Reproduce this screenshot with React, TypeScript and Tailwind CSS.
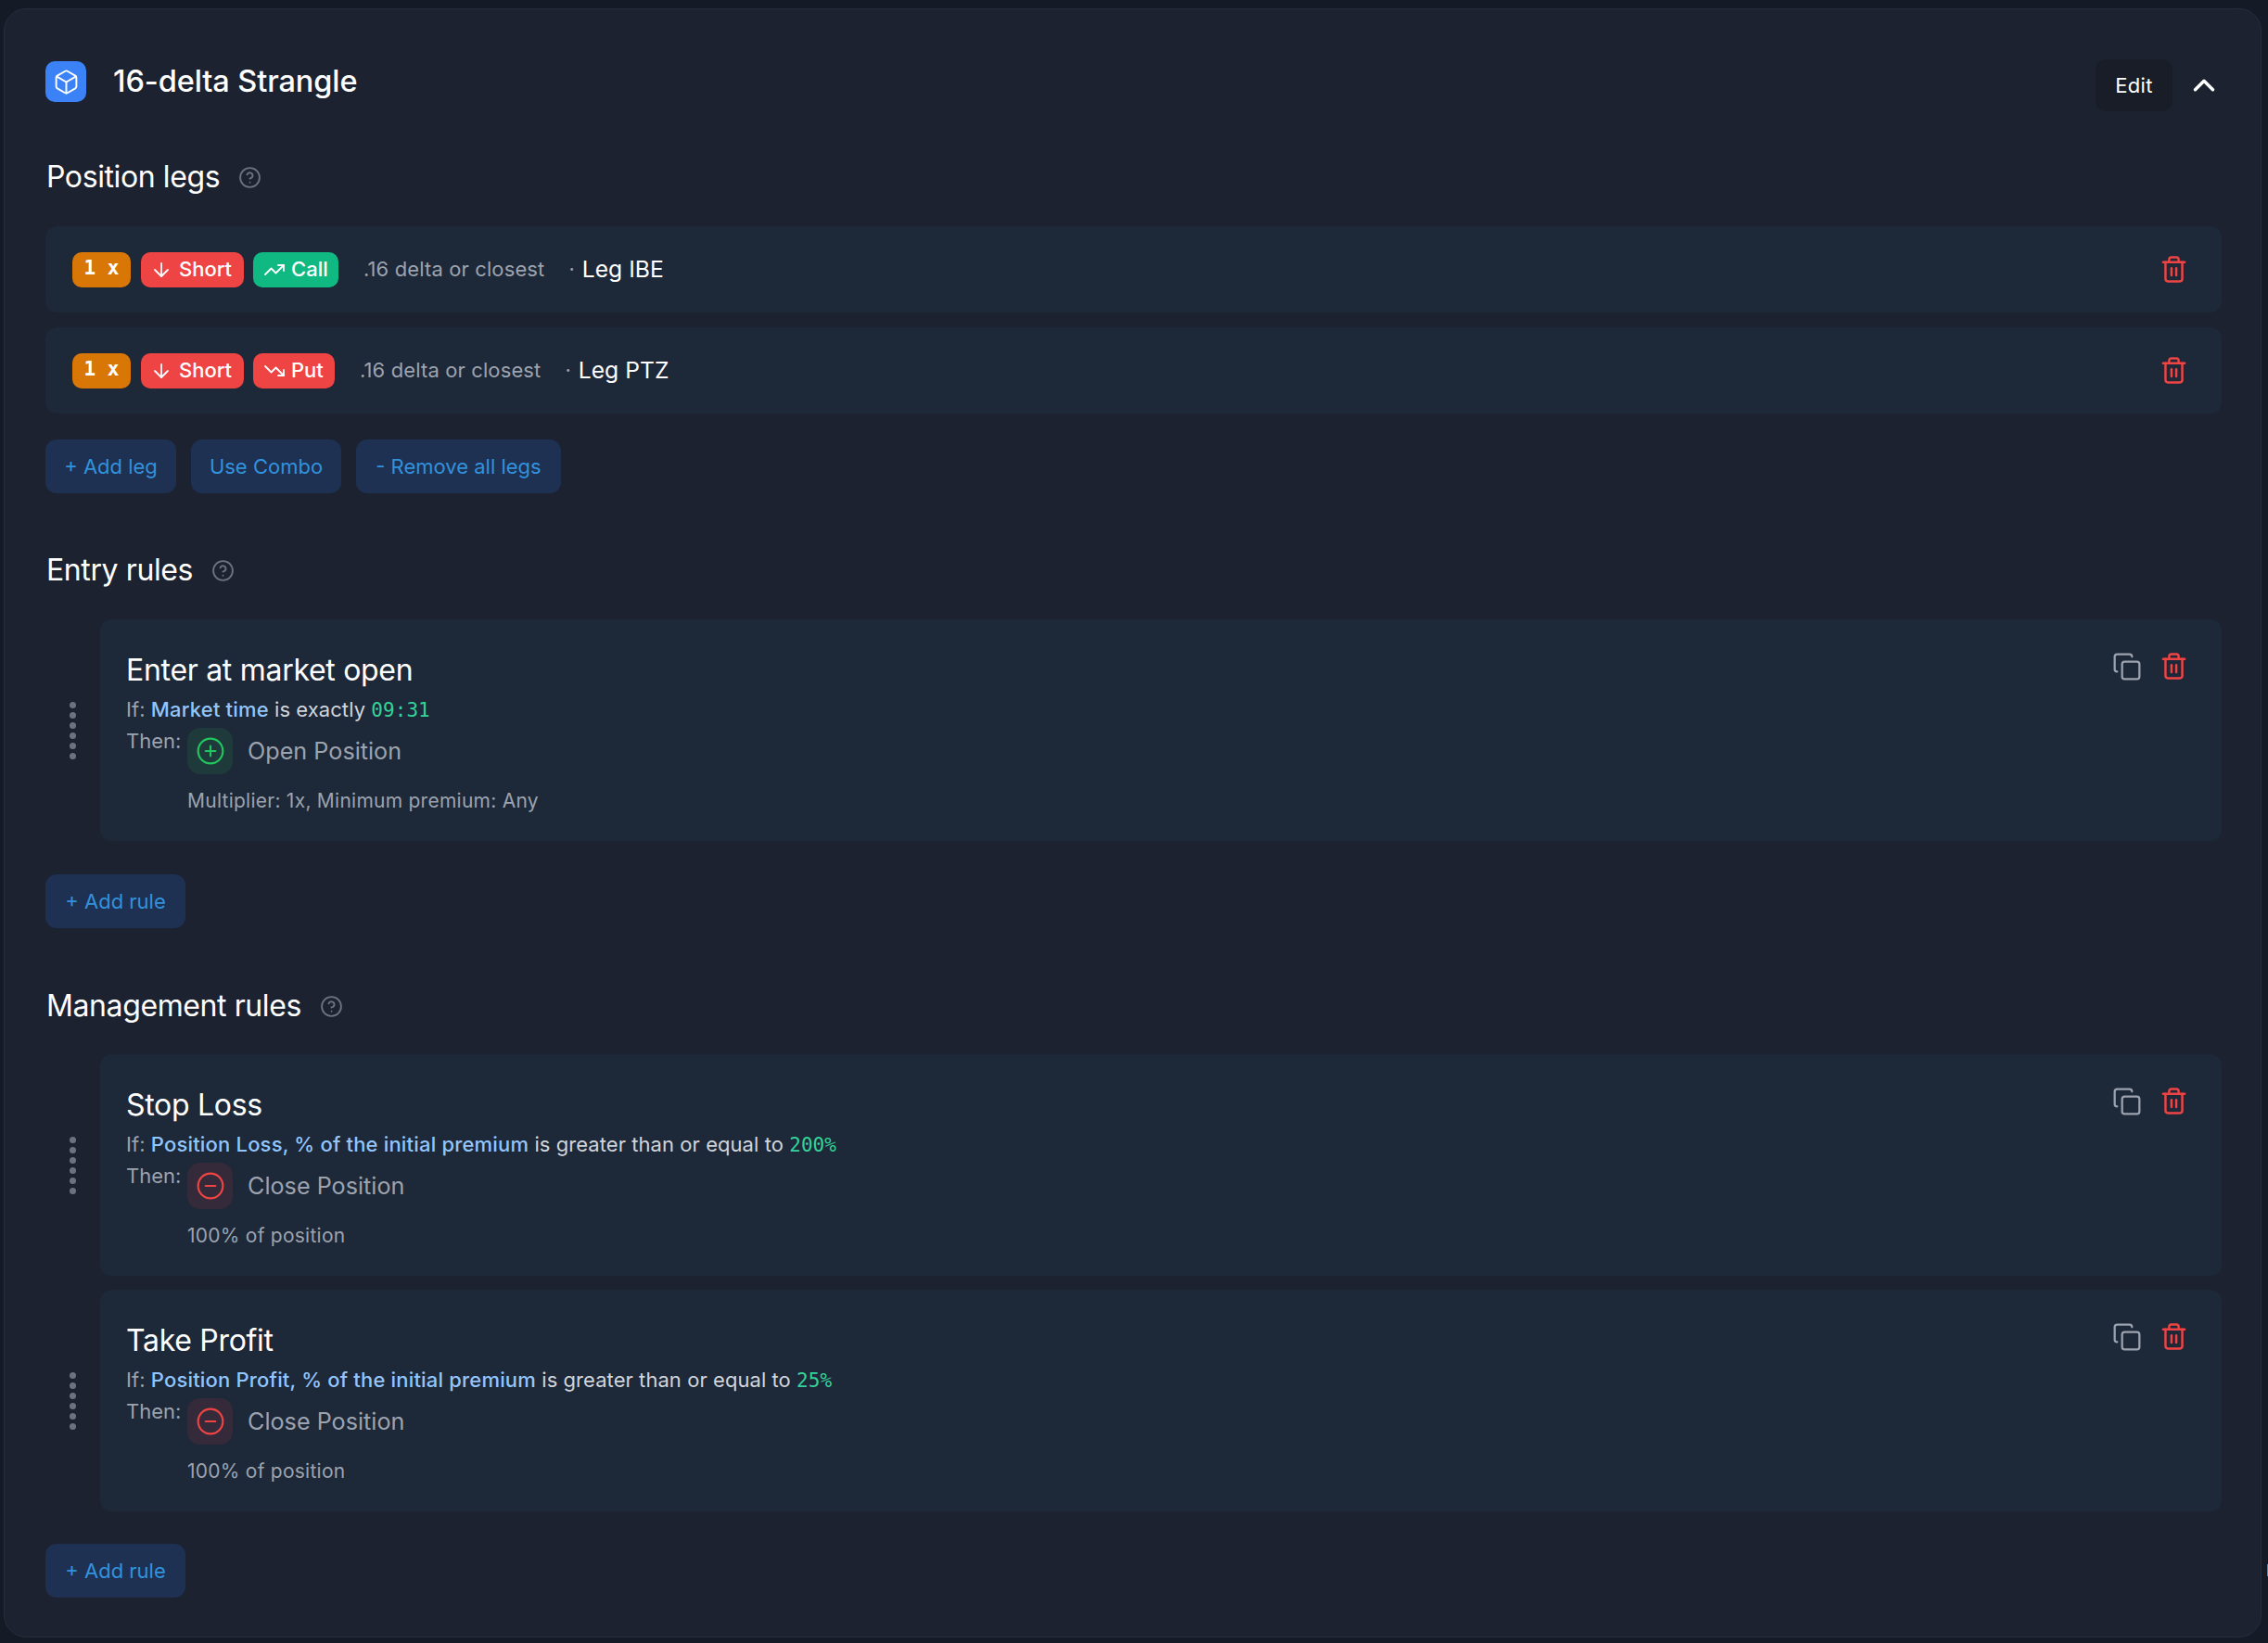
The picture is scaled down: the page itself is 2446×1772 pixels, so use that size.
import { ArrowDown, Box, ChevronUp, CircleHelp, CircleMinus, CirclePlus, Copy, Trash2, TrendingDown, TrendingUp } from 'lucide-react';

const mono = 'font-["DejaVu_Sans_Mono",monospace]';

function SectionTitle({ title }: { title: string }) {
  return (
    <div className="flex items-center gap-[20px] h-[40px]">
      <h2 className="ml-[1px] text-[32px] leading-[40px] font-normal text-white tracking-[-0.4px]">{title}</h2>
      <CircleHelp className="w-[25px] h-[25px] text-[#6b7280]" strokeWidth={1.8} />
    </div>
  );
}

function ActionButton({ label, width }: { label: string; width: string }) {
  return (
    <button className={`h-[58px] rounded-[12px] bg-[#1e3152] text-[#3291dc] text-[22px] leading-[58px] text-center ${width}`}>
      {label}
    </button>
  );
}

function Badge({ color, className, children }: { color: string; className?: string; children: React.ReactNode }) {
  return (
    <span className={`h-[38px] rounded-[10px] flex items-center text-white text-[22px] font-medium ${color} ${className ?? ''}`}>
      {children}
    </span>
  );
}

function LegRow({ call, name }: { call: boolean; name: string }) {
  return (
    <div className="h-[93px] rounded-[12px] bg-[#1d2838] flex items-center pl-[29px] pr-[36px]">
      <Badge color="bg-[#d97706]" className="w-[63px] justify-center">
        <span className={`whitespace-pre text-[21px] font-bold -mt-[1px] ${mono}`}>1 x</span>
      </Badge>
      <Badge color="bg-[#ef4444]" className="w-[111px] ml-[11px] pl-[10px] gap-[7px]">
        <ArrowDown className="w-[24px] h-[24px]" strokeWidth={1.8} />
        Short
      </Badge>
      {call ? (
        <Badge color="bg-[#10b981]" className="w-[92px] ml-[10px] pl-[11px] gap-[6px]">
          <TrendingUp className="w-[24px] h-[24px]" strokeWidth={1.8} />
          Call
        </Badge>
      ) : (
        <Badge color="bg-[#ef4444]" className="w-[88px] ml-[10px] pl-[11px] gap-[6px]">
          <TrendingDown className="w-[24px] h-[24px]" strokeWidth={1.8} />
          Put
        </Badge>
      )}
      <span className="ml-[27px] text-[22px] text-[#9ca3af] tracking-[0.12px]">.16 delta or closest</span>
      <span className="ml-[26px] text-[22px] text-[#9ca3af]">·</span>
      <span className="ml-[8px] text-[24.7px] text-white">{name}</span>
      <Trash2 className="ml-auto w-[31px] h-[31px] text-[#ef4444]" strokeWidth={1.9} />
    </div>
  );
}

function DragHandle() {
  return (
    <div className="w-[59px] shrink-0 flex flex-col items-center pr-[1px] gap-[4px]">
      {[0, 1, 2, 3, 4, 5].map((dot) => (
        <span key={dot} className="w-[7px] h-[7px] rounded-full bg-[#6b7280]" />
      ))}
    </div>
  );
}

interface Rule {
  title: string;
  field: string;
  op: string;
  value: string;
  open?: boolean;
  action: string;
  note: string;
}

function RuleCard({ rule }: { rule: Rule }) {
  return (
    <div className="flex items-center">
      <DragHandle />
      <div className="flex-1 h-[239px] rounded-[12px] bg-[#1d2838] pl-[28px] pr-[36px] pt-[36px] flex justify-between">
        <div>
          <h3 className="text-[32px] leading-[38px] text-white font-normal tracking-[-0.3px]">{rule.title}</h3>
          <p className="mt-[9px] text-[22px] leading-[28px] text-[#d1d5db] tracking-[0.06px]">
            <span className="text-[#9ca3af]">If: </span>
            <span className="text-[#93c5fd] font-medium tracking-[0.18px]">{rule.field}</span> {rule.op}{' '}
            <span className={`text-[#34d399] text-[21px] ${mono}`}>{rule.value}</span>
          </p>
          <div className="flex items-start mt-[5px]">
            <span className="text-[22px] leading-[28px] text-[#9ca3af] w-[66px] shrink-0">Then:</span>
            <div className="flex items-center">
              <div className={`w-[49px] h-[50px] rounded-[14px] flex items-center justify-center ${rule.open ? 'bg-[#1f3a3a]' : 'bg-[#352a39]'}`}>
                {rule.open ? (
                  <CirclePlus className="w-[32px] h-[32px] text-[#22c55e]" strokeWidth={1.6} />
                ) : (
                  <CircleMinus className="w-[32px] h-[32px] text-[#ef4444]" strokeWidth={1.6} />
                )}
              </div>
              <span className="ml-[16px] mt-[1px] text-[25.2px] text-[#9ca3af]">{rule.action}</span>
            </div>
          </div>
          <p className="ml-[66px] mt-[15px] text-[21px] leading-[28px] text-[#9ca3af] tracking-[0.25px]">{rule.note}</p>
        </div>
        <div className="flex gap-[19px] -mt-[1px]">
          <Copy className="w-[32px] h-[32px] text-[#9ca3af]" strokeWidth={1.7} />
          <Trash2 className="w-[31px] h-[31px] text-[#ef4444]" strokeWidth={1.9} />
        </div>
      </div>
    </div>
  );
}

const entryRule: Rule = {
  title: 'Enter at market open',
  field: 'Market time',
  op: 'is exactly',
  value: '09:31',
  open: true,
  action: 'Open Position',
  note: 'Multiplier: 1x, Minimum premium: Any',
};

const managementRules: Rule[] = [
  {
    title: 'Stop Loss',
    field: 'Position Loss, % of the initial premium',
    op: 'is greater than or equal to',
    value: '200%',
    action: 'Close Position',
    note: '100% of position',
  },
  {
    title: 'Take Profit',
    field: 'Position Profit, % of the initial premium',
    op: 'is greater than or equal to',
    value: '25%',
    action: 'Close Position',
    note: '100% of position',
  },
];

export default function App() {
  return (
    <div className="relative w-[2446px] h-[1772px] overflow-hidden bg-[#141a26] pl-[4px] pr-[7px] pt-[9px] pb-[6px] font-['Inter',sans-serif]">
      <div className="h-full rounded-[24px] border border-[#262d3b] bg-[#1c2230] pl-[44px] pr-[42px]">
        {/* Header */}
        <div className="flex items-center h-[44px] mt-[56px]">
          <div className="w-[44px] h-[44px] rounded-[10px] bg-[#3b82f6] flex items-center justify-center">
            <Box className="w-[29px] h-[29px] text-white" strokeWidth={1.6} />
          </div>
          <h1 className="ml-[29px] text-[32.5px] font-medium text-white tracking-[-0.1px]">16-delta Strangle</h1>
          <button className="ml-auto w-[83px] h-[56px] mt-[8px] rounded-[12px] bg-[#181d28] text-white text-[22px] tracking-[0.3px]">Edit</button>
          <ChevronUp className="ml-[15px] mt-[8px] w-[38px] h-[38px] text-white" strokeWidth={2.2} />
        </div>

        {/* Position legs */}
        <div className="mt-[61px]">
          <SectionTitle title="Position legs" />
        </div>
        <div className="mt-[33px] flex flex-col gap-[16px]">
          <LegRow call name="Leg IBE" />
          <LegRow call={false} name="Leg PTZ" />
        </div>
        <div className="mt-[28px] flex gap-[16px]">
          <ActionButton label="+ Add leg" width="w-[141px]" />
          <ActionButton label="Use Combo" width="w-[162px]" />
          <ActionButton label="- Remove all legs" width="w-[221px]" />
        </div>

        {/* Entry rules */}
        <div className="mt-[63px]">
          <SectionTitle title="Entry rules" />
        </div>
        <div className="mt-[33px]">
          <RuleCard rule={entryRule} />
        </div>
        <div className="mt-[36px]">
          <ActionButton label="+ Add rule" width="w-[151px]" />
        </div>

        {/* Management rules */}
        <div className="mt-[64px]">
          <SectionTitle title="Management rules" />
        </div>
        <div className="mt-[32px] flex flex-col gap-[15px]">
          {managementRules.map((rule) => (
            <RuleCard key={rule.title} rule={rule} />
          ))}
        </div>
        <div className="mt-[35px]">
          <ActionButton label="+ Add rule" width="w-[151px]" />
        </div>
      </div>
      <span className="absolute right-0 top-[1687px] w-[1px] h-[13px] bg-[#3b8fd6]" />
    </div>
  );
}
